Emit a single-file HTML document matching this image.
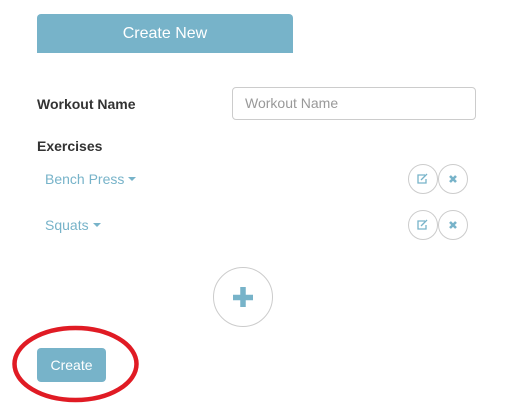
<!DOCTYPE html>
<html><head><style>
body{margin:0;width:517px;height:409px;background:#fff;font-family:"Liberation Sans",Arial,sans-serif;position:relative;overflow:hidden}
.a{position:absolute}
.l{color:#77b3c9;font-size:14px}
.cr{display:inline-block;width:0;height:0;border-left:4px solid transparent;border-right:4px solid transparent;border-top:4px solid #77b3c9;vertical-align:middle;margin-left:4px;margin-top:-2px}
</style></head><body>
<div class="a" style="left:37px;top:14px;width:256px;height:39px;background:#77b3c9;border-radius:4px 4px 0 0;color:#fff;font-size:16px;text-align:center;line-height:39px">Create New</div>
<div class="a" style="left:37px;top:96px;font-size:14px;font-weight:bold;color:#333">Workout Name</div>
<div class="a" style="left:232px;top:87px;width:244px;height:33px;border:1px solid #ccc;border-radius:4px;box-sizing:border-box;color:#999;font-size:14px;line-height:31px;padding-left:12px">Workout Name</div>
<div class="a" style="left:37px;top:138px;font-size:14px;font-weight:bold;color:#333">Exercises</div>
<div class="a l" style="left:45px;top:171px">Bench Press<span class="cr"></span></div>
<div class="a l" style="left:45px;top:217px">Squats<span class="cr"></span></div>
<svg class="a" style="left:0;top:0" width="517" height="409">
<g fill="none" stroke="#ccc">
<circle cx="423" cy="179" r="14.5"/><circle cx="453" cy="179" r="14.5"/>
<circle cx="423" cy="225" r="14.5"/><circle cx="453" cy="225" r="14.5"/>
<circle cx="243" cy="297" r="29.5"/>
</g>
<g fill="none" stroke="#77b3c9" stroke-width="1.3">
<path d="M425 175h-7v8h8v-4"/><path d="M421 180l6-6"/>
<path d="M425 221h-7v8h8v-4"/><path d="M421 226l6-6"/>
</g>
<g stroke="#77b3c9" stroke-width="2.6">
<path d="M450 176l6 6M456 176l-6 6"/><path d="M450 222l6 6M456 222l-6 6"/>
</g>
<path d="M243 287v20M233 297.5h20" stroke="#77b3c9" stroke-width="5.5"/>
<rect x="37" y="348" width="69" height="34" rx="4" fill="#77b3c9"/>
<text x="71.5" y="370" fill="#fff" font-size="14" text-anchor="middle" font-family="Liberation Sans,sans-serif">Create</text>
<ellipse cx="75.5" cy="364" rx="61" ry="36" fill="none" stroke="#e01b24" stroke-width="4.5"/>
</svg>
</body></html>
